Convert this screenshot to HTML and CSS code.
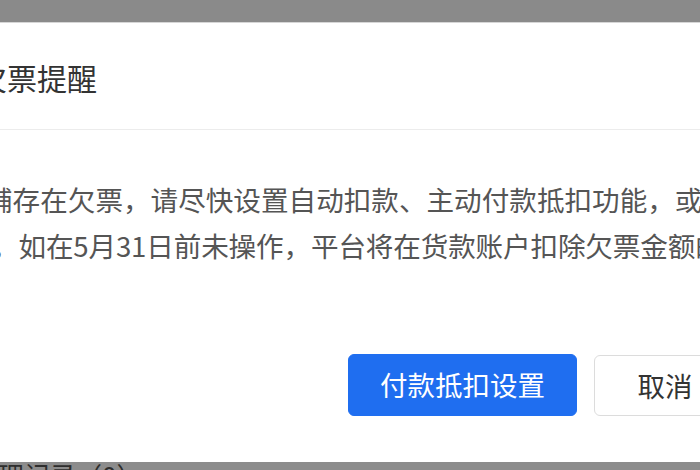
FILE: index.html
```html
<!DOCTYPE html>
<html lang="zh-CN">
<head>
<meta charset="utf-8">
<title>欠票提醒</title>
<link rel="stylesheet" href="styles.css">
</head>
<body>
<div class="page">
  <div class="mask-top"></div>
  <div class="dialog">
    <div class="dialog-header">
      <h2 class="dialog-title">欠票提醒</h2>
    </div>
    <div class="dialog-body">
      <p class="line line-1">铺存在欠票，请尽快设置自动扣款、主动付款抵扣功能，或</p>
      <p class="line line-2">。如在5月31日前未操作，平台将在货款账户扣除欠票金额的</p>
    </div>
    <div class="dialog-footer">
      <button class="btn btn-primary">付款抵扣设置</button>
      <button class="btn btn-default">取消</button>
    </div>
  </div>
  <div class="mask-bottom">
    <span class="behind-text">理记录（0）</span>
  </div>
</div>
</body>
</html>
```

FILE: styles.css
```css
* { box-sizing: border-box; }
html, body {
  margin: 0;
  padding: 0;
  width: 700px;
  height: 470px;
  overflow: hidden;
  background: #8a8a8a;
  font-family: "Noto Sans CJK SC", "Noto Sans", sans-serif;
}
.page {
  width: 700px;
  height: 470px;
  overflow: hidden;
  display: flex;
  flex-direction: column;
}
.mask-top {
  height: 22px;
  flex: none;
  background: #8a8a8a;
}
.dialog {
  flex: none;
  margin-left: -23px;
  width: 800px;
  background: #fff;
  border-top: 1px solid #d6d6d6;
}
.dialog-header {
  padding: 34px 0 32px 0;
  border-bottom: 1px solid #ececec;
}
.dialog-title {
  margin: 0;
  font-size: 30px;
  line-height: 40px;
  font-weight: 400;
  color: #333;
  white-space: nowrap;
}
.dialog-body {
  padding-top: 46px;
}
.line {
  margin: 0;
  font-size: 27.6px;
  line-height: 46px;
  color: #555;
  white-space: nowrap;
}
.line-1 { margin-left: 8px; }
.line-2 { margin-left: 14px; letter-spacing: -0.15px; }
.dialog-footer {
  display: flex;
  gap: 17px;
  padding: 86px 0 46px 371px;
}
.btn {
  height: 62px;
  border-radius: 6px;
  font-family: inherit;
  font-size: 27.5px;
  line-height: 1;
  cursor: pointer;
  white-space: nowrap;
}
.btn-primary {
  width: 229px;
  background: #1f6ef0;
  border: 1px solid #1f6ef0;
  color: #fff;
}
.btn-default {
  width: 142px;
  margin-top: 1px;
  height: 61px;
  background: #fff;
  border: 1px solid #dcdcdc;
  color: #333;
}
.mask-bottom {
  flex: 1;
  background: #8c8c8c;
  overflow: hidden;
}
.behind-text {
  display: block;
  margin-left: -2px;
  font-size: 26px;
  line-height: 26px;
  color: #2e2e2e;
  white-space: nowrap;
}
```
